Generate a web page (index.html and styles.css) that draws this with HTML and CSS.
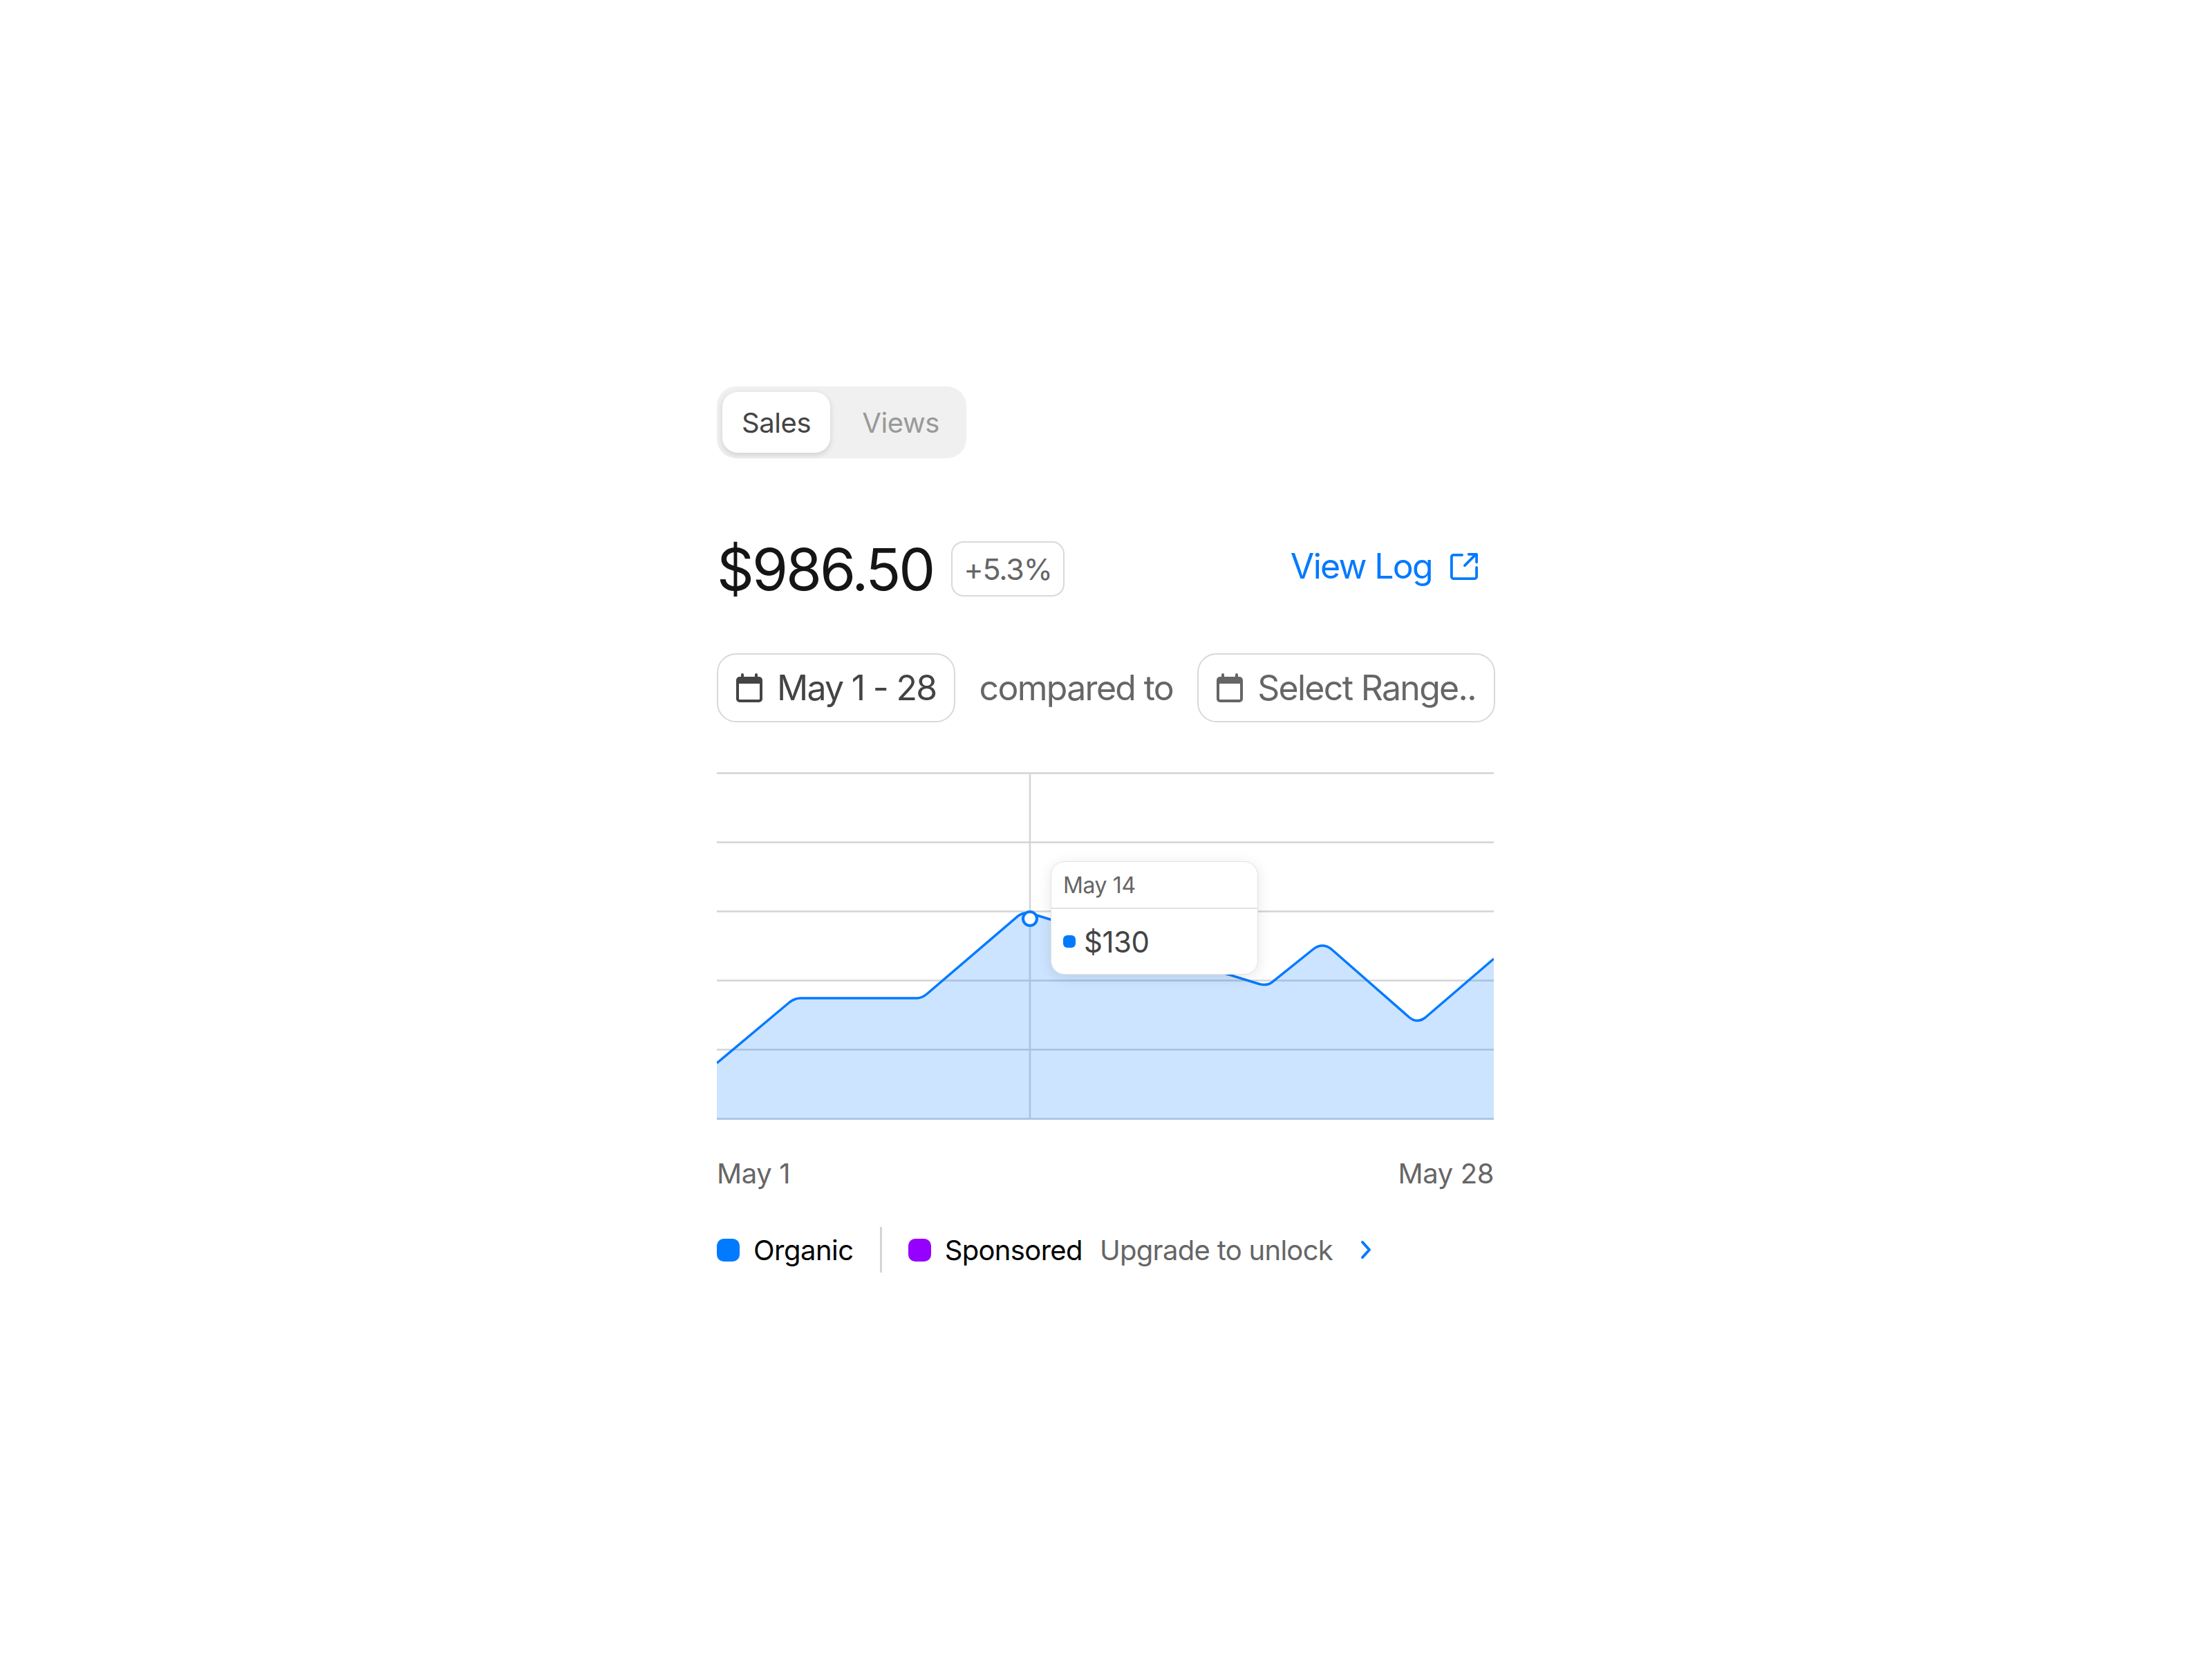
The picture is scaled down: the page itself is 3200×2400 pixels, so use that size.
FILE: index.html
```html
<!DOCTYPE html>
<html>
  <head>
    <title>Sales</title>
    <link rel="stylesheet" href="styles.css">
  </head>
  <body>
    <div class="card">
      <div class="tabs">
        <div class="tab active">Sales</div>
        <div class="tab">Views</div>
      </div>

      <div class="summary">
        <div class="amount">$986.50</div>
        <div class="badge">+5.3%</div>
        <a class="view-log" href="#">
          View Log
          <svg class="log-icon" viewBox="0 0 42 42" fill="none" stroke="#007aff" stroke-width="4" stroke-linecap="round" stroke-linejoin="round">
            <path d="M18 4H5a3 3 0 0 0-3 3v30a3 3 0 0 0 3 3h32a3 3 0 0 0 3-3V23"/>
            <path d="M22 20L39 3M28 3h12v12"/>
          </svg>
        </a>
      </div>

      <div class="dates">
        <div class="date-btn dark">
          <svg class="cal-icon" viewBox="0 0 38 42">
            <path fill="currentColor" d="M9 0a2 2 0 0 1 2 2v3h16V2a2 2 0 0 1 4 0v3h2a5 5 0 0 1 5 5v27a5 5 0 0 1-5 5H5a5 5 0 0 1-5-5V10a5 5 0 0 1 5-5h2V2a2 2 0 0 1 2-2zM4 15v22a1 1 0 0 0 1 1h28a1 1 0 0 0 1-1V15z"/>
          </svg>
          May 1 - 28
        </div>
        <span class="compared">compared to</span>
        <div class="date-btn">
          <svg class="cal-icon" viewBox="0 0 38 42">
            <path fill="currentColor" d="M9 0a2 2 0 0 1 2 2v3h16V2a2 2 0 0 1 4 0v3h2a5 5 0 0 1 5 5v27a5 5 0 0 1-5 5H5a5 5 0 0 1-5-5V10a5 5 0 0 1 5-5h2V2a2 2 0 0 1 2-2zM4 15v22a1 1 0 0 0 1 1h28a1 1 0 0 0 1-1V15z"/>
          </svg>
          Select Range..
        </div>
      </div>

      <div class="chart">
        <svg class="plot" viewBox="0 0 1124 503">
          <g stroke="#d4d4d4" stroke-width="2.5">
            <path d="M0 1.5H1124M0 101.5H1124M0 201.5H1124M0 301.5H1124M0 401.5H1124M0 501.5H1124"/>
            <path d="M453 3V500"/>
          </g>
          <path fill="#007aff" fill-opacity="0.2" d="M0 421L105 333Q113 327 121 327H289Q297 327 305 320L436 208Q443 203 453 204L783 306Q795 310 803 304L863 256Q876 246 889 256L1002 355Q1013 364 1025 355L1124 270V503H0Z"/>
          <path fill="none" stroke="#007aff" stroke-width="3.5" d="M0 421L105 333Q113 327 121 327H289Q297 327 305 320L436 208Q443 203 453 204L783 306Q795 310 803 304L863 256Q876 246 889 256L1002 355Q1013 364 1025 355L1124 270"/>
          <circle cx="453" cy="212" r="10" fill="#fff" stroke="#007aff" stroke-width="4"/>
        </svg>
        <div class="tooltip">
          <div class="tip-date">May 14</div>
          <div class="tip-value"><span class="tip-dot"></span>$130</div>
        </div>
      </div>

      <div class="axis">
        <span>May 1</span>
        <span>May 28</span>
      </div>

      <div class="legend">
        <span class="swatch blue"></span>
        <span class="legend-name">Organic</span>
        <span class="divider"></span>
        <span class="swatch purple"></span>
        <span class="legend-name sponsored">Sponsored</span>
        <span class="upgrade">Upgrade to unlock</span>
        <svg class="chevron" viewBox="0 0 18 28" fill="none" stroke="#007aff" stroke-width="4" stroke-linecap="round" stroke-linejoin="round">
          <path d="M4 3L14 14L4 25"/>
        </svg>
      </div>
    </div>
  </body>
</html>
```
FILE: styles.css
```css
body {
  margin: 0;
  padding: 0 2px 0 0;
  min-height: 100vh;
  display: flex;
  align-items: center;
  justify-content: center;
  background-color: #fff;
  font-family: Inter, "Liberation Sans", sans-serif;
}

.card {
  width: 1124px;
  display: flex;
  flex-direction: column;
  align-items: stretch;
}

.tabs {
  display: flex;
  align-self: flex-start;
  height: 104px;
  box-sizing: border-box;
  padding: 8px;
  border-radius: 28px;
  background-color: #f0f0f0;
}

.tab {
  display: flex;
  align-items: center;
  padding: 0 28px;
  border-radius: 22px;
  font-size: 40px;
  letter-spacing: -0.4px;
  color: #999;
}

.tab.active {
  background-color: #fff;
  color: #444;
  box-shadow: 0 3px 8px rgba(0, 0, 0, 0.14);
}

.tab:not(.active) {
  padding: 0 31px 0 46px;
}

.summary {
  display: flex;
  align-items: center;
  margin-top: 118px;
  height: 84px;
}

.amount {
  font-size: 84px;
  letter-spacing: -3px;
  color: #151515;
}

.badge {
  margin-left: 26px;
  height: 80px;
  box-sizing: border-box;
  display: flex;
  align-items: center;
  padding: 0 16px;
  border: 2px solid #d9d9d9;
  border-radius: 18px;
  font-size: 43px;
  letter-spacing: -1.2px;
  color: #666;
}

.view-log {
  margin-left: auto;
  margin-right: 23px;
  display: flex;
  align-items: center;
  gap: 26px;
  font-size: 50px;
  letter-spacing: -1.7px;
  color: #007aff;
  text-decoration: none;
  position: relative;
  top: -4px;
}

.log-icon {
  width: 40px;
  height: 40px;
}

.dates {
  display: flex;
  align-items: center;
  justify-content: space-between;
  margin: 80px -2px 0 0;
}

.date-btn {
  display: flex;
  align-items: center;
  gap: 21px;
  height: 100px;
  box-sizing: border-box;
  padding: 0 26px;
  border: 2px solid #d9d9d9;
  border-radius: 28px;
  font-size: 50px;
  letter-spacing: -1.7px;
  white-space: nowrap;
  color: #666;
}

.date-btn.dark {
  padding-right: 25px;
  color: #444;
}

.compared {
  font-size: 50px;
  letter-spacing: -1.7px;
  white-space: nowrap;
  color: #666;
}

.cal-icon {
  width: 38px;
  height: 42px;
}

.chart {
  position: relative;
  margin-top: 72px;
  height: 503px;
}

.plot {
  display: block;
  width: 1124px;
  height: 503px;
}

.tooltip {
  position: absolute;
  left: 483px;
  top: 129px;
  width: 300px;
  box-sizing: border-box;
  background-color: #fff;
  border: 1.5px solid #e2e2e2;
  border-radius: 20px;
  box-shadow: 0 4px 20px rgba(0, 0, 0, 0.1);
}

.tip-date {
  height: 68px;
  box-sizing: border-box;
  display: flex;
  align-items: center;
  padding-left: 17px;
  border-bottom: 2px solid #e2e2e2;
  font-size: 32px;
  letter-spacing: -0.4px;
  color: #666;
}

.tip-value {
  height: 94px;
  display: flex;
  align-items: center;
  gap: 12px;
  padding-left: 17px;
  font-size: 42px;
  letter-spacing: -0.5px;
  color: #444;
}

.tip-dot {
  width: 18px;
  height: 18px;
  border-radius: 6px;
  background-color: #007aff;
}

.axis {
  display: flex;
  justify-content: space-between;
  margin-top: 53px;
  font-size: 40px;
  letter-spacing: -0.4px;
  color: #666;
}

.legend {
  display: flex;
  align-items: center;
  margin-top: 53px;
  height: 66px;
  font-size: 40px;
  letter-spacing: -0.5px;
}

.swatch {
  width: 33px;
  height: 33px;
  border-radius: 10px;
  margin-right: 20px;
}

.swatch.blue {
  background-color: #007aff;
}

.swatch.purple {
  background-color: #9500ff;
}

.legend-name {
  color: #000;
}

.legend-name.sponsored {
  letter-spacing: -0.65px;
}

.divider {
  width: 3px;
  height: 66px;
  margin: 0 38px 0 38px;
  background-color: #d4d4d4;
}

.upgrade {
  margin-left: 25px;
  letter-spacing: -0.7px;
  color: #666;
}

.chevron {
  width: 18px;
  height: 28px;
  margin-left: 39px;
}
```
